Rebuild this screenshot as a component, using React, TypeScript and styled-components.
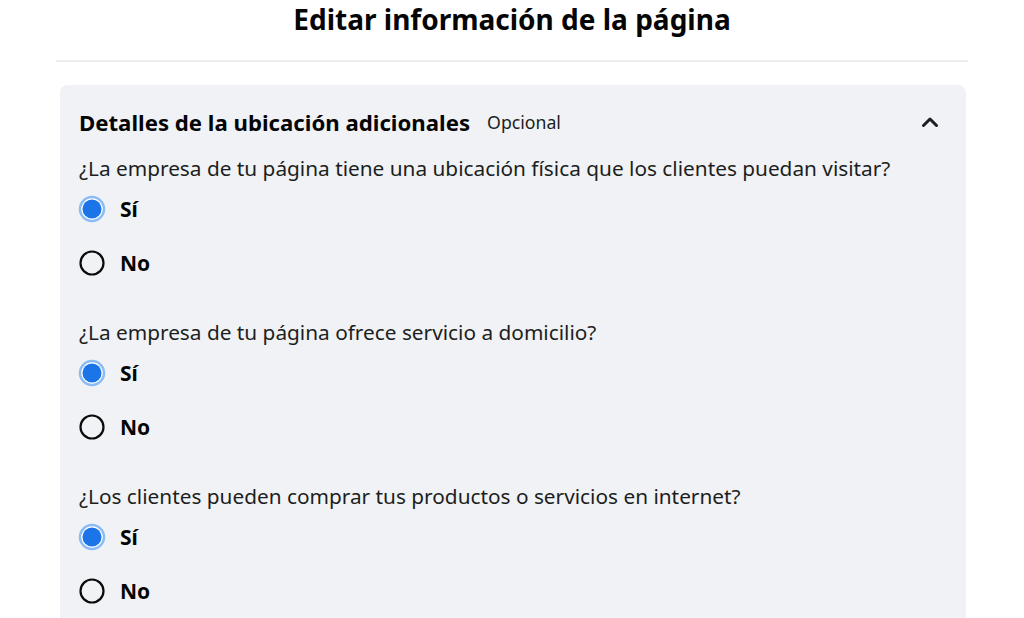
import styled, { createGlobalStyle } from "styled-components";

const GlobalStyle = createGlobalStyle`
  html, body {
    margin: 0;
    padding: 0;
    background: #ffffff;
    font-family: "Noto Sans", "Open Sans", Arial, sans-serif;
    color: #1c1e21;
  }
`;

const Page = styled.div`
  width: 1024px;
  height: 618px;
  overflow: hidden;
  display: flex;
  flex-direction: column;
  align-items: center;
`;

const Header = styled.div`
  flex-shrink: 0;
  width: 912px;
  height: 62px;
  box-sizing: border-box;
  border-bottom: 2px solid #ebedf0;
  display: flex;
  justify-content: center;
  align-items: flex-start;
`;

const Title = styled.h1`
  margin: 0;
  font-size: 28px;
  line-height: 38px;
  font-weight: 700;
  color: #050505;
`;

const Panel = styled.section`
  flex-shrink: 0;
  margin-top: 23px;
  width: 906px;
  margin-left: 2px;
  min-height: 560px;
  box-sizing: border-box;
  background: #f0f2f5;
  border-radius: 8px 8px 0 0;
  padding: 21px 22px 0 19px;
`;

const PanelHead = styled.div`
  display: flex;
  align-items: center;
  height: 32px;
  margin-bottom: 16px;
`;

const PanelTitle = styled.h2`
  margin: 0;
  font-size: 22.2px;
  font-weight: 700;
  color: #050505;
`;

const Optional = styled.span`
  margin-left: 17px;
  font-size: 17.7px;
  color: #1c1e21;
`;

const Chevron = styled.button`
  margin-left: auto;
  margin-right: 2px;
  border: none;
  background: none;
  padding: 0;
  width: 24px;
  height: 24px;
  display: flex;
  align-items: center;
  justify-content: center;
  cursor: pointer;
`;

const Question = styled.div`
  display: flex;
  flex-direction: column;
  gap: 14px;
  margin-bottom: 35px;
`;

const Prompt = styled.p`
  margin: 0 0 -7px;
  font-size: 20.8px;
  line-height: 28px;
  color: #1c1e21;
  white-space: nowrap;
`;

const Option = styled.label`
  display: flex;
  align-items: center;
  gap: 14px;
  height: 40px;
  margin-left: -1px;
  cursor: pointer;
`;

const OptionText = styled.span`
  font-size: 21px;
  font-weight: 700;
  color: #050505;
`;

function RadioIcon({ checked }: { checked: boolean }) {
  return checked ? (
    <svg width="28" height="28" viewBox="0 0 28 28">
      <circle cx="14" cy="14" r="12" fill="#ffffff" stroke="#8bbcf6" strokeWidth="2.5" />
      <circle cx="14" cy="14" r="9.5" fill="#1b74e8" />
    </svg>
  ) : (
    <svg width="28" height="28" viewBox="0 0 28 28">
      <circle cx="14" cy="14" r="11.5" fill="none" stroke="#0b0b0b" strokeWidth="2.2" />
    </svg>
  );
}

const questions = [
  "¿La empresa de tu página tiene una ubicación física que los clientes puedan visitar?",
  "¿La empresa de tu página ofrece servicio a domicilio?",
  "¿Los clientes pueden comprar tus productos o servicios en internet?",
];

export default function App() {
  return (
    <Page>
      <GlobalStyle />
      <Header>
        <Title>Editar información de la página</Title>
      </Header>
      <Panel>
        <PanelHead>
          <PanelTitle>Detalles de la ubicación adicionales</PanelTitle>
          <Optional>Opcional</Optional>
          <Chevron aria-label="Contraer">
            <svg width="18" height="12" viewBox="0 0 18 12">
              <path d="M2.5 9.5 L9 3 L15.5 9.5" fill="none" stroke="#1c1e21" strokeWidth="3" strokeLinecap="round" strokeLinejoin="round" />
            </svg>
          </Chevron>
        </PanelHead>
        {questions.map((q, i) => (
          <Question key={i} role="radiogroup">
            <Prompt>{q}</Prompt>
            <Option>
              <RadioIcon checked />
              <OptionText>Sí</OptionText>
            </Option>
            <Option>
              <RadioIcon checked={false} />
              <OptionText>No</OptionText>
            </Option>
          </Question>
        ))}
      </Panel>
    </Page>
  );
}
